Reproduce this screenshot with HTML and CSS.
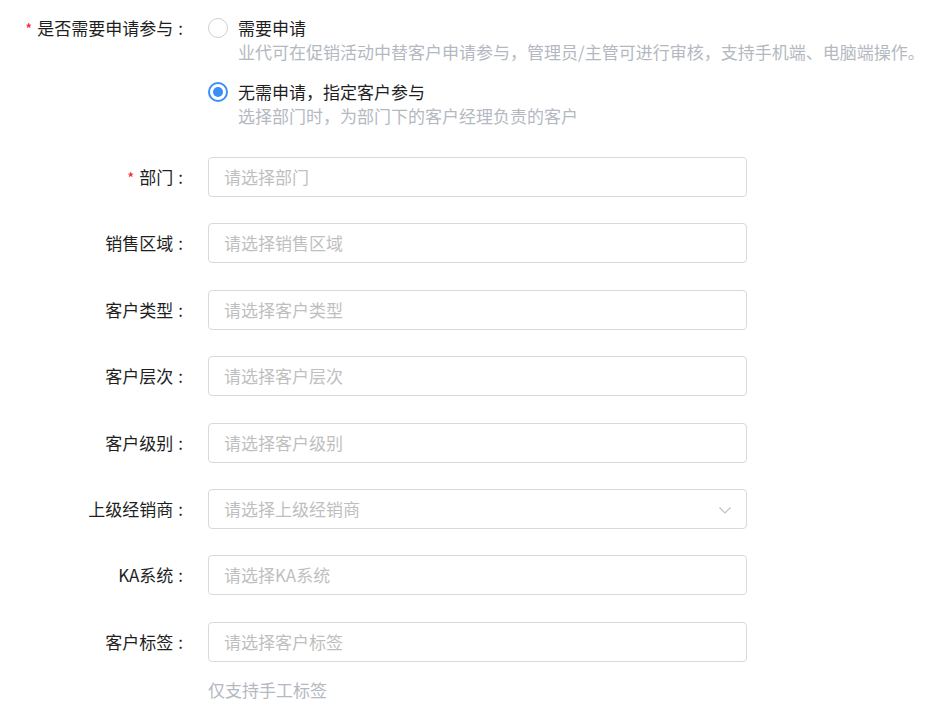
FILE: index.html
```html
<!DOCTYPE html>
<html lang="zh-CN">
<head>
  <meta charset="UTF-8">
  <meta name="viewport" content="width=device-width, initial-scale=1.0">
  <link rel="stylesheet" href="styles.css">
</head>
<body>
  <!-- Customer Scope Form -->
  <form class="scope-form">

    <!-- Apply mode -->
    <div class="form-row radio-row">
      <label class="form-label required">是否需要申请参与</label>
      <div class="radio-group">
        <div class="radio-option">
          <span class="radio"></span>
          <div class="radio-text">
            <div class="radio-title">需要申请</div>
            <div class="radio-desc">业代可在促销活动中替客户申请参与，管理员/主管可进行审核，支持手机端、电脑端操作。</div>
          </div>
        </div>
        <div class="radio-option">
          <span class="radio checked"></span>
          <div class="radio-text">
            <div class="radio-title">无需申请，指定客户参与</div>
            <div class="radio-desc">选择部门时，为部门下的客户经理负责的客户</div>
          </div>
        </div>
      </div>
    </div>

    <div class="form-row">
      <label class="form-label required">部门</label>
      <div class="form-control">
        <div class="select-box">请选择部门</div>
      </div>
    </div>

    <div class="form-row">
      <label class="form-label">销售区域</label>
      <div class="form-control">
        <div class="select-box">请选择销售区域</div>
      </div>
    </div>

    <div class="form-row">
      <label class="form-label">客户类型</label>
      <div class="form-control">
        <div class="select-box">请选择客户类型</div>
      </div>
    </div>

    <div class="form-row">
      <label class="form-label">客户层次</label>
      <div class="form-control">
        <div class="select-box">请选择客户层次</div>
      </div>
    </div>

    <div class="form-row">
      <label class="form-label">客户级别</label>
      <div class="form-control">
        <div class="select-box">请选择客户级别</div>
      </div>
    </div>

    <div class="form-row">
      <label class="form-label">上级经销商</label>
      <div class="form-control">
        <div class="select-box has-arrow">
          请选择上级经销商
          <svg class="arrow" width="14" height="14" viewBox="0 0 14 14"><path d="M1.5 4.5 L7 10 L12.5 4.5" fill="none" stroke="#bfbfbf" stroke-width="1.2"/></svg>
        </div>
      </div>
    </div>

    <div class="form-row">
      <label class="form-label">KA系统</label>
      <div class="form-control">
        <div class="select-box">请选择KA系统</div>
      </div>
    </div>

    <div class="form-row">
      <label class="form-label">客户标签</label>
      <div class="form-control">
        <div class="select-box">请选择客户标签</div>
        <div class="form-extra">仅支持手工标签</div>
      </div>
    </div>

  </form>
</body>
</html>
```

FILE: styles.css
```css
/* General Styles */
body {
  font-family: "PingFang SC", "Noto Sans CJK SC", sans-serif;
  margin: 0;
  padding: 0;
  background-color: #FFFFFF;
  color: #262626;
  font-size: 17px;
}

.scope-form {
  padding-top: 14px;
}

/* Rows */
.form-row {
  display: flex;
  align-items: flex-start;
  margin-bottom: 26.4px;
}

.form-label {
  width: 183px;
  flex-shrink: 0;
  height: 40px;
  line-height: 40px;
  text-align: right;
  padding-right: 25px;
  color: #1f1f1f;
  white-space: nowrap;
}

.form-label::after {
  content: ":";
  margin-left: 5px;
}

.form-label.required::before {
  content: "*";
  color: #f5222d;
  margin-right: 5px;
  font-size: 15px;
}

.form-control {
  width: 539px;
}

/* Select boxes */
.select-box {
  position: relative;
  height: 40px;
  box-sizing: border-box;
  border: 1px solid #d9d9d9;
  border-radius: 4px;
  padding: 0 15px;
  line-height: 38px;
  color: #bfbfbf;
}

.select-box .arrow {
  position: absolute;
  right: 14px;
  top: 13px;
}

.form-extra {
  color: #b4b9c1;
  margin-top: 16px;
  line-height: 24px;
}

/* Radio group */
.radio-row {
  margin-bottom: 31px;
}

.radio-row .form-label {
  height: 28px;
  line-height: 28px;
}

.radio-group {
  display: flex;
  flex-direction: column;
  gap: 16px;
}

.radio-option {
  display: flex;
  align-items: flex-start;
}

.radio {
  width: 20px;
  height: 20px;
  box-sizing: border-box;
  border: 1px solid #d0d0d0;
  border-radius: 50%;
  margin: 4px 10px 0 0;
  position: relative;
  flex-shrink: 0;
}

.radio.checked {
  border: 2px solid #3a8ef6;
}

.radio.checked::after {
  content: "";
  position: absolute;
  left: 3px;
  top: 3px;
  width: 10px;
  height: 10px;
  border-radius: 50%;
  background-color: #3a8ef6;
}

.radio-title {
  line-height: 28px;
  color: #1f1f1f;
}

.radio-desc {
  line-height: 20px;
  color: #b4b9c1;
}
```
